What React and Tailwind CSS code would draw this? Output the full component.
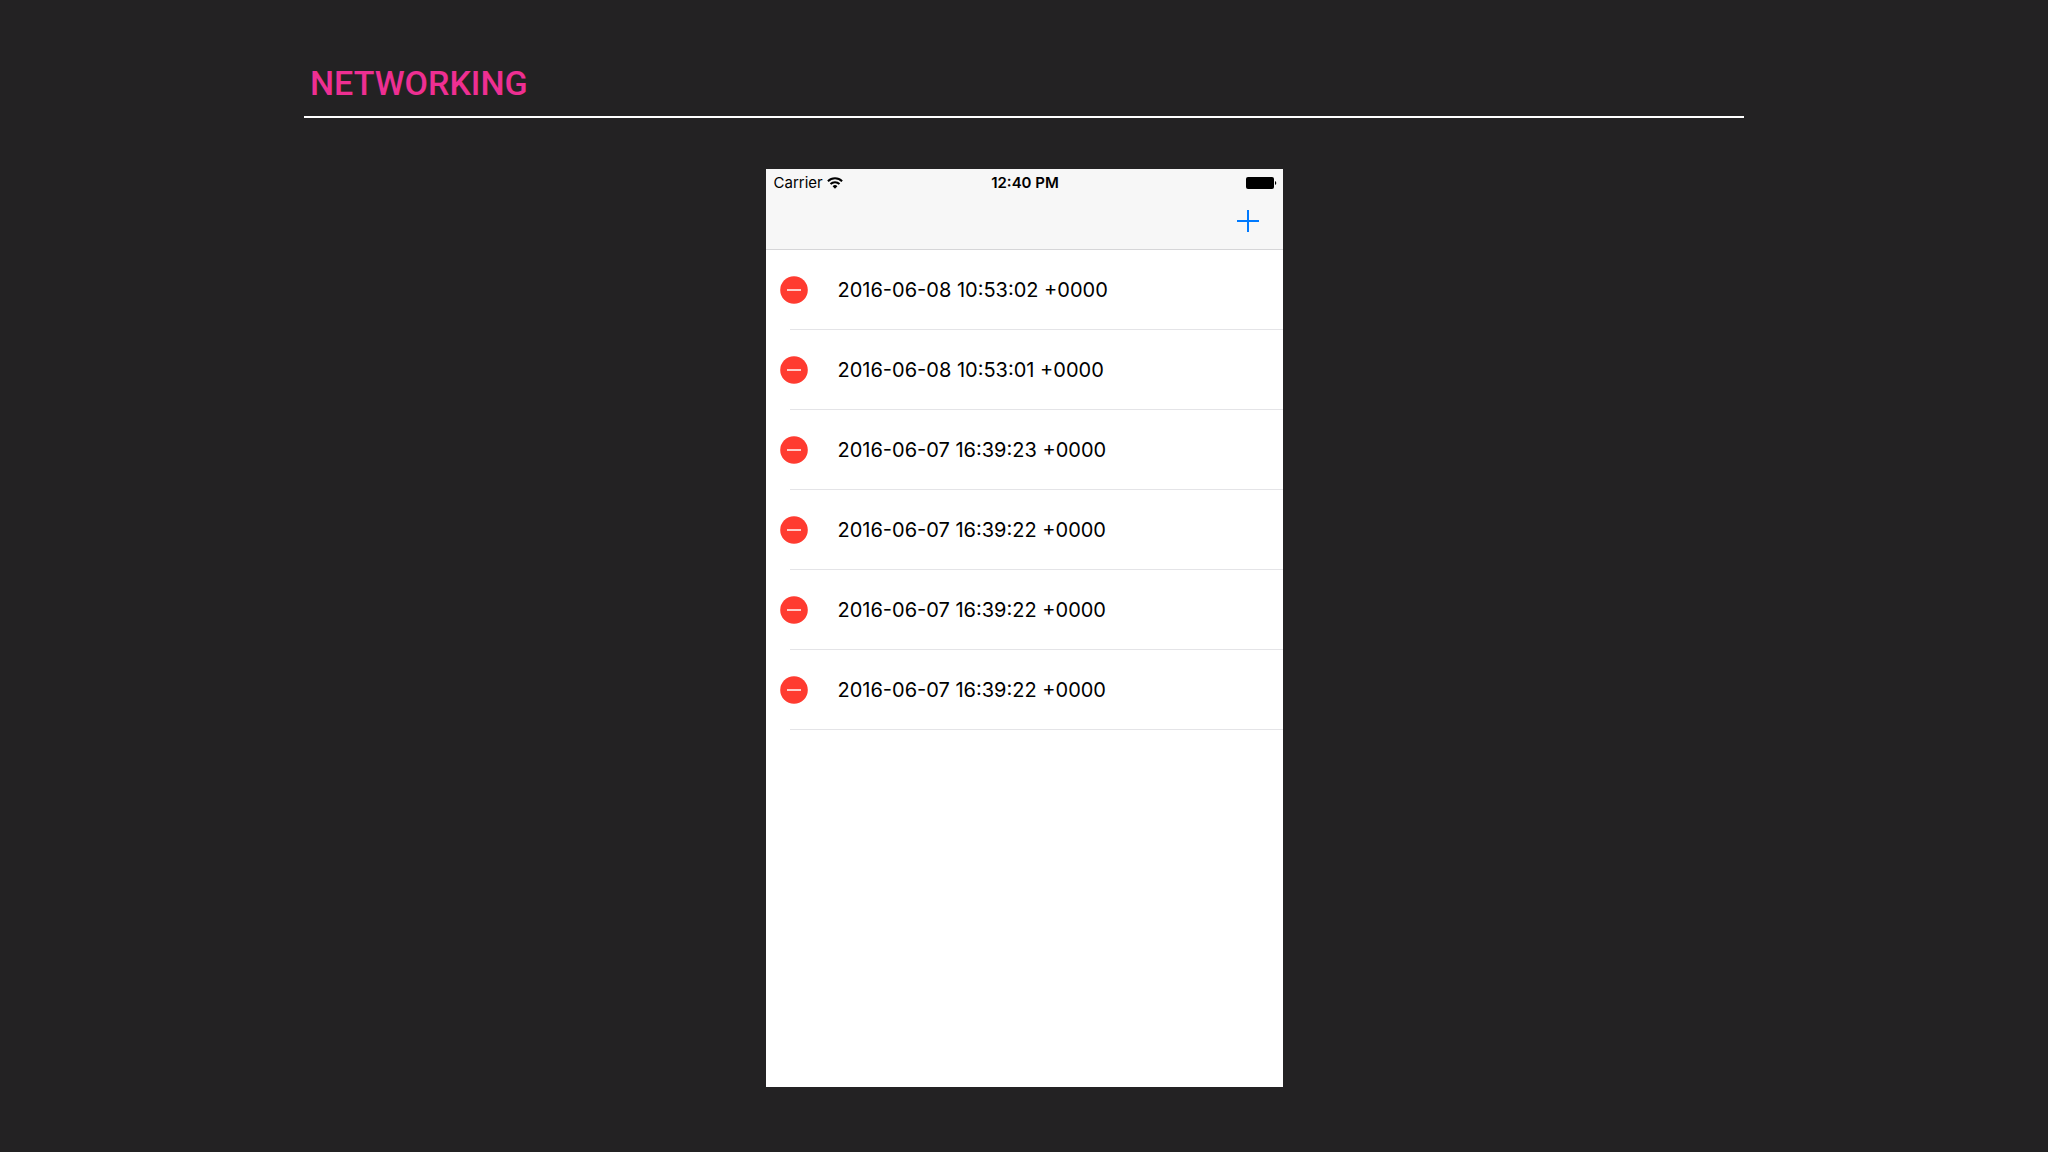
const rows = [
  "2016-06-08 10:53:02 +0000",
  "2016-06-08 10:53:01 +0000",
  "2016-06-07 16:39:23 +0000",
  "2016-06-07 16:39:22 +0000",
  "2016-06-07 16:39:22 +0000",
  "2016-06-07 16:39:22 +0000",
];

function StatusBar() {
  return (
    <div className="grid h-7 grid-cols-3 items-center pl-2 pr-1.5 text-[15px] text-black">
      <div className="flex items-center gap-1">
        <span>Carrier</span>
        <svg width="16" height="12" viewBox="0 0 16 12" fill="none" stroke="black" strokeWidth="2">
          <path d="M.9 4.2a10.2 10.2 0 0 1 14.2 0" />
          <path d="M3.5 7a6.4 6.4 0 0 1 9 0" />
          <path d="M8 11.8 5.6 9.3a3.4 3.4 0 0 1 4.8 0z" fill="black" stroke="none" />
        </svg>
      </div>
      <span className="text-center font-semibold">12:40 PM</span>
      <svg className="justify-self-end" width="31" height="12" viewBox="0 0 31 12">
        <rect width="28" height="12" rx="2" />
        <path d="M29 4a2.2 2.2 0 0 1 0 4z" />
      </svg>
    </div>
  );
}

function Row({ label }) {
  return (
    <li>
      <div className="flex h-[79px] items-center pl-3.5">
        <button aria-label={`Delete ${label}`} className="shrink-0">
          <svg width="28" height="28" viewBox="0 0 28 28">
            <circle cx="14" cy="14" r="13.8" fill="#ff3b30" />
            <path d="M7 14h14" stroke="white" strokeWidth="1.5" />
          </svg>
        </button>
        <span className="ml-[30px] text-xl text-black">{label}</span>
      </div>
      <div className="ml-6 h-px bg-[#e4e4e7]" />
    </li>
  );
}

export default function App() {
  return (
    <div className="min-h-screen bg-[#232223] font-['Inter',sans-serif]">
      <header className="mx-auto w-[1440px] max-w-full border-b-2 border-white pt-[63px] pb-[13px]">
        <h1 className="px-1.5 font-['Roboto',sans-serif] text-[34px] leading-10 font-medium text-[#ee2f92]">
          NETWORKING
        </h1>
      </header>
      <main className="mx-auto mt-[51px] min-h-[918px] w-[517px] max-w-full bg-white">
        <div className="border-b border-[#d6d6d8] bg-[#f7f7f7]">
          <StatusBar />
          <div className="flex h-[52px] justify-end pr-6 pb-1">
            <button aria-label="Add">
              <svg width="22" height="22" stroke="#007aff" strokeWidth="2">
                <path d="M11 0v22M0 11h22" />
              </svg>
            </button>
          </div>
        </div>
        <ul>
          {rows.map((label, i) => (
            <Row key={i} label={label} />
          ))}
        </ul>
      </main>
    </div>
  );
}
